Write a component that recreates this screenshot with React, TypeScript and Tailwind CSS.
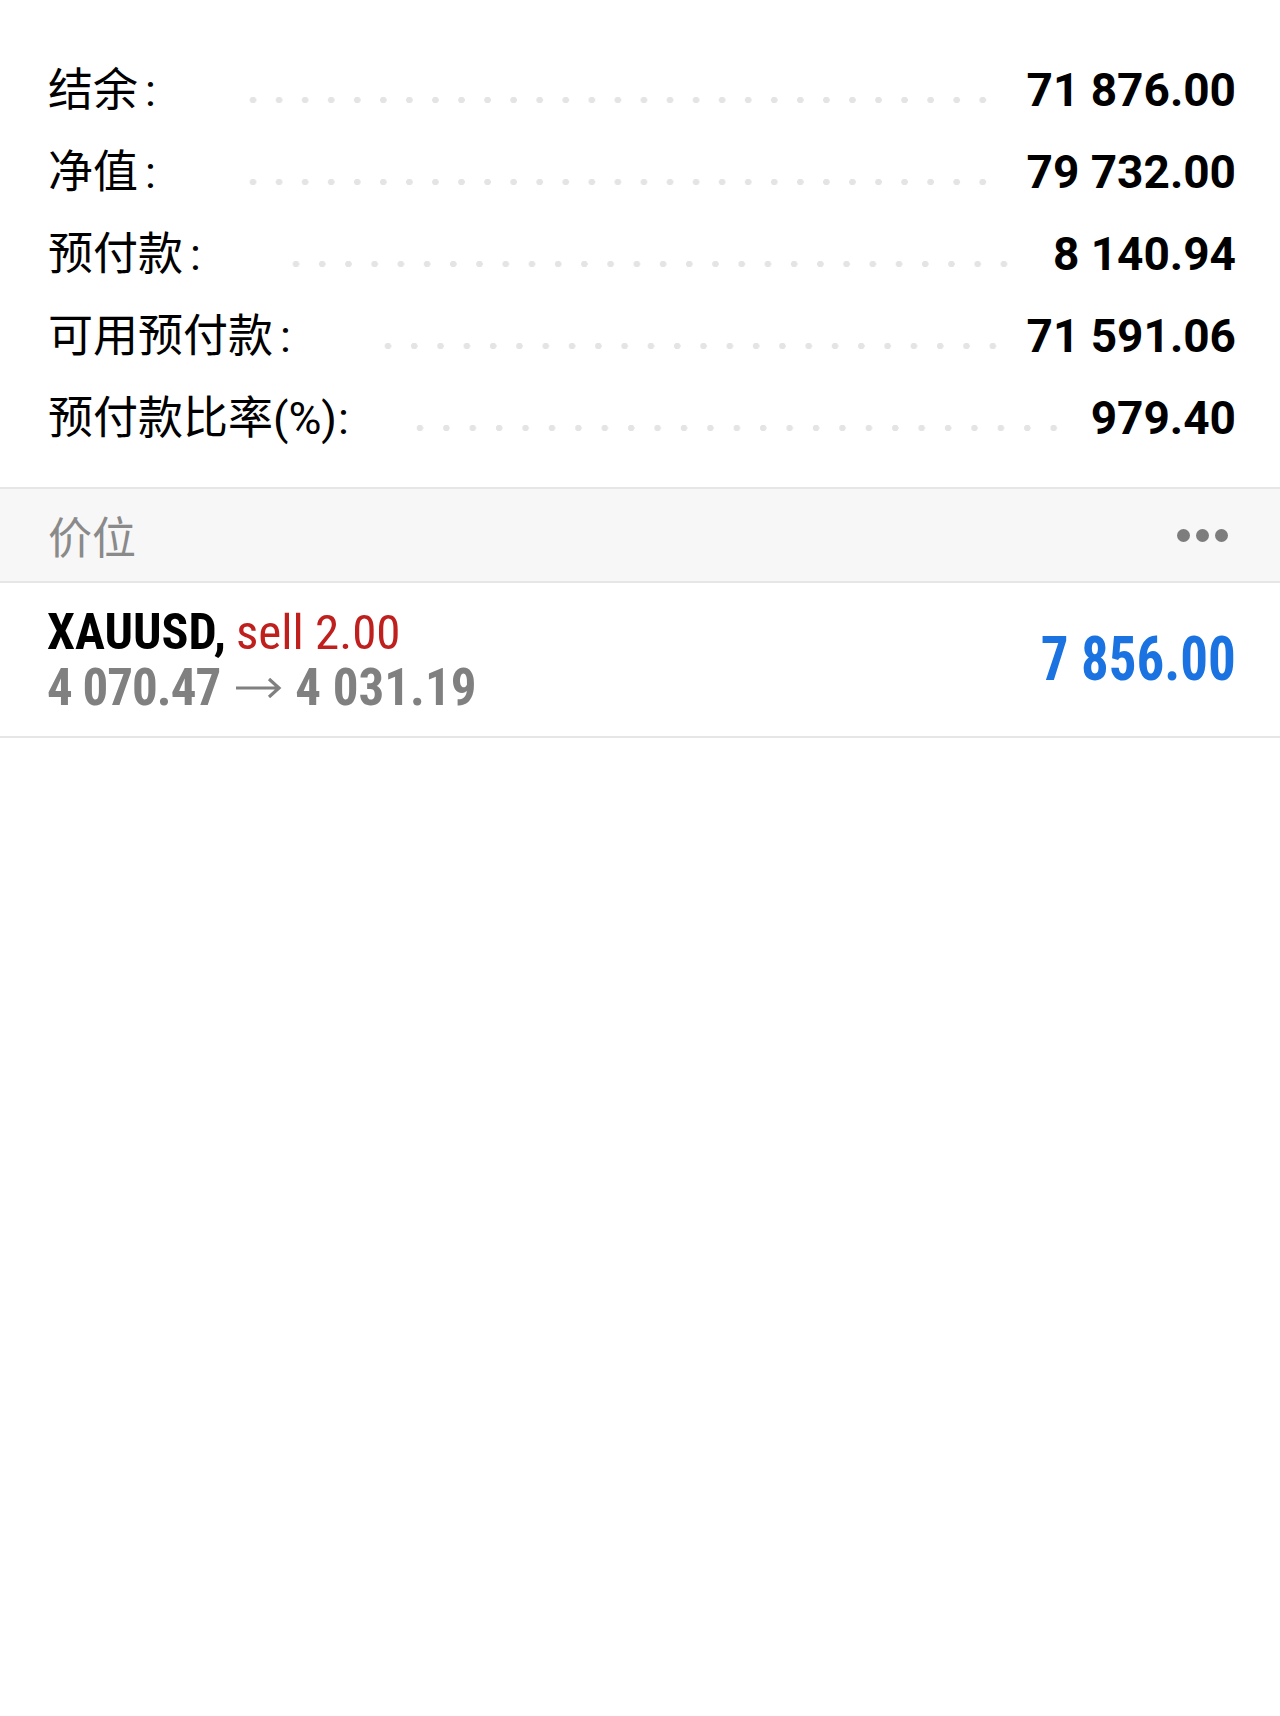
import React from "react";

type Row = { label: string; colon: string; value: string; lead: string };

const rows: Row[] = [
  { label: "结余", colon: "ml-[7px]", value: "71 876.00", lead: "ml-[84px] mr-[30px]" },
  { label: "净值", colon: "ml-[7px]", value: "79 732.00", lead: "ml-[84px] mr-[30px]" },
  { label: "预付款", colon: "ml-[7px]", value: "8 140.94", lead: "ml-[82px] mr-[36px]" },
  { label: "可用预付款", colon: "ml-[7px]", value: "71 591.06", lead: "ml-[84px] mr-[20px]" },
  { label: "预付款比率(%)", colon: "ml-[1px]", value: "979.40", lead: "ml-[58px] mr-[24px]" },
];

const cjk = "font-['Roboto','Noto_Sans_CJK_SC',sans-serif]";

export default function App() {
  return (
    <div className="min-h-[1716px] w-[1280px] bg-white">
      <div className="pt-[49px] pb-[28px] pl-[48px] pr-[44px]">
        {rows.map((r) => (
          <div key={r.label} className="flex h-[82px] items-center">
            <span className={`${cjk} text-[45px] leading-none text-black whitespace-nowrap`}>
              {r.label}
              <span className={r.colon}>:</span>
            </span>
            <div
              className={`flex-1 h-[6px] mt-[20px] ${r.lead} bg-[radial-gradient(circle,#e4e4e4_3px,transparent_3.5px)] bg-[length:26px_6px] [background-repeat:space_no-repeat]`}
            />
            <span className="font-['Roboto',sans-serif] font-bold text-[46px] leading-none text-black whitespace-nowrap">
              {r.value}
            </span>
          </div>
        ))}
      </div>
      <div className="flex h-[96px] items-center justify-between border-y-2 border-[#e6e6e6] bg-[#f7f7f7] px-[48px]">
        <span className="font-['Noto_Sans_CJK_SC',sans-serif] text-[44px] leading-none text-[#8a8a8a]">价位</span>
        <div className="flex items-center gap-[6px] mr-[4px]">
          <span className="h-[13px] w-[13px] rounded-full bg-[#7d7d7d]" />
          <span className="h-[13px] w-[13px] rounded-full bg-[#7d7d7d]" />
          <span className="h-[13px] w-[13px] rounded-full bg-[#7d7d7d]" />
        </div>
      </div>
      <div className="flex h-[155px] items-center justify-between border-b-2 border-[#e6e6e6] pl-[47px] pr-[44px]">
        <div className="flex flex-col font-['Roboto_Condensed','Roboto',sans-serif]">
          <div className="text-[50px] leading-[55px] whitespace-nowrap">
            <span className="font-bold text-black">XAUUSD,</span>
            <span className="ml-[10px] text-[49px] text-[#bf1f1d]">sell 2.00</span>
          </div>
          <div className="flex items-center text-[51px] leading-[55px] font-bold text-[#808080] whitespace-nowrap">
            <span className="tracking-[-1px]">4 070.47</span>
            <svg className="ml-[15px] mr-[13px] mt-[2px]" width="47" height="24" viewBox="0 0 47 24" fill="none">
              <path d="M1 12H44M34 3L44 12L34 21" stroke="#808080" strokeWidth="3.2" strokeLinecap="butt" strokeLinejoin="miter" />
            </svg>
            <span>4 031.19</span>
          </div>
        </div>
        <span className="origin-right scale-x-[0.9] font-['Roboto_Condensed','Roboto',sans-serif] font-bold text-[61px] leading-none text-[#1a73e0] whitespace-nowrap">
          7 856.00
        </span>
      </div>
    </div>
  );
}
